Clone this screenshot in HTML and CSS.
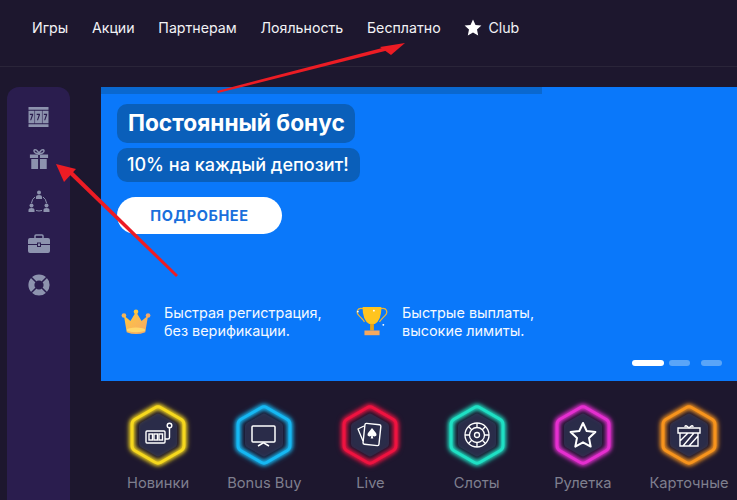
FILE: index.html
```html
<!DOCTYPE html>
<html lang="en">
<head>
	<meta charset="utf-8" />
	<title>Casino</title>
	<link rel="stylesheet" href="styles.css">
</head>
<body>
<header class="topbar">
	<nav class="nav">
		<a>Игры</a>
		<a>Акции</a>
		<a>Партнерам</a>
		<a>Лояльность</a>
		<a>Бесплатно</a>
		<a class="club">
			<svg width="18" height="17" viewBox="0 0 18 17"><path fill="#fff" d="M9 .5l2.500 5.400 5.900.7-4.400 4 1.200 5.800L9 13.500l-5.200 2.900L5 10.600l-4.400-4 5.900-.7z"/></svg>
			Club
		</a>
	</nav>
</header>

<div class="main">
	<aside class="sidebar">
		<!-- slots -->
		<svg width="23" height="20" viewBox="0 0 24 22"><path fill="#8d93ae" d="M1 0h22v3H1zM1 19h22v3H1zM1 4h6.600v14H1zM8.200 4h7.600v14H8.200zM16.400 4H23v14h-6.600z"/><path fill="#2a1d4e" d="M2.500 7.500h3.600v1.400L4 14.500H2.800l1.900-5.600H2.500zM10 7.500h3.600v1.400l-2.100 5.600h-1.200l1.900-5.600H10zM17.900 7.500h3.600v1.400l-2.100 5.600h-1.200l1.900-5.600h-2.200z"/></svg>
		<!-- gift -->
		<svg width="20" height="22" viewBox="0 0 22 24"><path fill="#8d93ae" d="M1 7h9v4H1zM12 7h9v4h-9zM2.500 12H10v11H2.500zM12 12h7.500v11H12z"/><path fill="none" stroke="#8d93ae" stroke-width="1.600" d="M11 6.500C8 6 5 5 5.500 2.500 6.500.5 10 2.500 11 6.500zM11 6.500c3-.5 6-1.500 5.500-4C15.500.5 12 2.500 11 6.500z"/></svg>
		<!-- network -->
		<svg width="22" height="23" viewBox="0 0 22 23"><circle cx="11" cy="2.500" r="2" fill="#8d93ae"/><path fill="#8d93ae" d="M8 9V7q0-2 3-2t3 2v2zM.5 22v-2q0-2 3-2t3 2v2zM15.500 22v-2q0-2 3-2t3 2v2z"/><circle cx="3.500" cy="15.500" r="2" fill="#8d93ae"/><circle cx="18.500" cy="15.500" r="2" fill="#8d93ae"/><path fill="none" stroke="#8d93ae" stroke-width="1" d="M7 7q-3 2-3.500 6M15 7q3 2 3.500 6M8 20.500q3 1 6 0"/></svg>
		<!-- case -->
		<svg width="22" height="19" viewBox="0 0 22 19"><path fill="#8d93ae" d="M2 4h18q2 0 2 2v4H13V8.500H9V10H0V6q0-2 2-2zM0 11h9v2h4v-2h9v6q0 2-2 2H2q-2 0-2-2zM10 9.500h2V12h-2z"/><path fill="none" stroke="#8d93ae" stroke-width="1.500" d="M7 4V2q0-1 1-1h6q1 0 1 1v2"/></svg>
		<!-- lifebuoy -->
		<svg width="22" height="22" viewBox="0 0 22 22"><circle cx="11" cy="11" r="7.600" fill="none" stroke="#8d93ae" stroke-width="6"/><path stroke="#2a1d4e" stroke-width="1.500" d="M3 3l5 5M19 3l-5 5M3 19l5-5M19 19l-5-5"/></svg>
	</aside>

	<div class="content">
		<section class="banner">
			<div class="progress"></div>
			<div class="banner-title">Постоянный бонус</div>
			<div class="banner-sub">10% на каждый депозит!</div>
			<button type="button" class="more">ПОДРОБНЕЕ</button>

			<div class="features">
				<div class="feature feature-reg">
					<svg width="30" height="26" viewBox="0 0 32 28">
						<defs><linearGradient id="crown" x1="0" y1="0" x2="1" y2="1"><stop offset="0" stop-color="#ffc93c"/><stop offset="1" stop-color="#f5a86a"/></linearGradient></defs>
						<circle cx="3" cy="7" r="2.500" fill="#f3b45c"/><circle cx="16" cy="3" r="2.500" fill="#ffc93c"/><circle cx="29" cy="7" r="2.500" fill="#f3a66a"/>
						<path fill="url(#crown)" d="M3 7l7 6 6-10 6 10 7-6-3 18q-10 4-20 0z"/>
						<ellipse cx="16" cy="22.500" rx="10" ry="2.500" fill="#ffd76b"/>
					</svg>
					<p>Быстрая регистрация,<br>без верификации.</p>
				</div>
				<div class="feature">
					<svg width="34" height="36" viewBox="0 0 36 36">
						<path fill="none" stroke="#e8b43a" stroke-width="1.300" d="M9 4C2 2 1 8 4 11s5 5 6 7M27 4c7-2 8 4 5 7s-5 5-6 7"/>
						<path fill="#ffc41f" d="M8 2h20q0 14-7 18h-6Q8 16 8 2z"/>
						<path fill="#e8a417" d="M16 20h4v7h-4z"/>
						<path fill="#f6a95e" d="M10 27h16v5H10z"/>
						<circle cx="20" cy="6" r="1" fill="#fff"/><circle cx="3" cy="7" r="1" fill="#fff"/><circle cx="30" cy="21" r="1" fill="#fff"/>
					</svg>
					<p>Быстрые выплаты,<br>высокие лимиты.</p>
				</div>
			</div>

			<div class="dots">
				<span class="dot dot-on"></span>
				<span class="dot"></span>
				<span class="dot"></span>
			</div>
		</section>

		<section class="cats">
			<div class="cat cat-yellow">
				<svg class="hex" width="66" height="72" viewBox="0 0 66 72">
					<use href="#hexagon"/>
					<g fill="none" stroke="#fff" stroke-width="1.400"><rect x="21" y="32" width="19" height="12" rx="1"/><rect x="24" y="35" width="3.500" height="6"/><rect x="29" y="35" width="3.500" height="6"/><rect x="34" y="35" width="3.500" height="6"/><path d="M40 40h3q1.500 0 1.500-1.500V29"/><circle cx="44.500" cy="26.500" r="2.300"/></g>
				</svg>
				<span>Новинки</span>
			</div>
			<div class="cat cat-blue">
				<svg class="hex" width="66" height="72" viewBox="0 0 66 72">
					<use href="#hexagon"/>
					<g fill="none" stroke="#fff" stroke-width="1.500"><rect x="21" y="27" width="23" height="16" rx="1"/><path d="M27 47l5-3h1l5 3"/></g>
				</svg>
				<span>Bonus Buy</span>
			</div>
			<div class="cat cat-red">
				<svg class="hex" width="66" height="72" viewBox="0 0 66 72">
					<use href="#hexagon"/>
					<path fill="none" stroke="#fff" stroke-width="1.300" d="M27 27l-6 3 5 12"/>
					<rect x="27" y="25" width="16" height="21" rx="1.500" fill="none" stroke="#fff" stroke-width="1.400" transform="rotate(6 35 35)"/>
					<path fill="#fff" d="M35 29l4 5q1.500 3-1.500 3.500-1 0-1.800-.8l.6 2.800h-2.600l.6-2.800q-.8.800-1.800.8-3-.5-1.500-3.500z"/>
				</svg>
				<span>Live</span>
			</div>
			<div class="cat cat-teal">
				<svg class="hex" width="66" height="72" viewBox="0 0 66 72">
					<use href="#hexagon"/>
					<g fill="none" stroke="#fff" stroke-width="1.300"><circle cx="33" cy="36" r="12"/><circle cx="33" cy="36" r="7.500"/><circle cx="33" cy="36" r="2.500"/><path d="M33 24v4.500M33 43.500V48M21 36h4.500M40.500 36H45M24.500 27.500l3.200 3.200M38.300 41.300l3.200 3.200M41.500 27.500l-3.200 3.200M27.700 41.300l-3.200 3.200"/></g>
				</svg>
				<span>Слоты</span>
			</div>
			<div class="cat cat-pink">
				<svg class="hex" width="66" height="72" viewBox="0 0 66 72">
					<use href="#hexagon"/>
					<path fill="none" stroke="#fff" stroke-width="2" stroke-linejoin="round" d="M33 24l3.700 8 8.700 1-6.400 6 1.700 8.600L33 43.300l-7.700 4.300 1.700-8.600-6.400-6 8.700-1z"/>
				</svg>
				<span>Рулетка</span>
			</div>
			<div class="cat cat-orange">
				<svg class="hex" width="66" height="72" viewBox="0 0 66 72">
					<use href="#hexagon"/>
					<g fill="none" stroke="#fff" stroke-width="1.400"><path d="M22 29h22v5H22zM24 34h18v13H24zM27 47l11-13M24 42l8-8M33 47l9-10"/><path d="M33 29q-4-4-4-1M33 29q4-4 4-1"/></g>
				</svg>
				<span>Карточные</span>
			</div>
		</section>
	</div>
</div>

<!-- shared hexagon for the categories -->
<svg class="defs" width="0" height="0">
	<symbol id="hexagon" viewBox="0 0 66 72" overflow="visible">
		<path class="hex-in" d="M31 15.200q2-1.200 4 0l15 8.600q2 1.200 2 3.400v17.600q0 2.200-2 3.400l-15 8.600q-2 1.200-4 0l-15-8.600q-2-1.200-2-3.400V27.200q0-2.200 2-3.400z"/>
		<path class="hex-out" d="M30 8.700q3-1.700 6 0l20 11.600q3 1.700 3 5.200v21q0 3.500-3 5.200L36 63.300q-3 1.700-6 0L10 51.700q-3-1.700-3-5.200v-21q0-3.500 3-5.200z"/>
	</symbol>
</svg>

<!-- red arrows drawn on top of the shot -->
<svg class="arrows" width="737" height="500" viewBox="0 0 737 500">
	<g fill="#ec1c24">
		<path d="M217 91L218 93L389 50L386 47z"/>
		<path d="M405 43L380 47L391 55z"/>
		<path d="M176 277L178 275L72 171L69 174z"/>
		<path d="M56 164L64 182L76 169z"/>
	</g>
</svg>
</body>
</html>
```

FILE: styles.css
```css
*{
	box-sizing: border-box;
	font-family: Inter, "Noto Sans", sans-serif;
}

html, body{
	margin: 0;
	height: 500px;
	overflow: hidden;
	background: #1d172e;
}

.topbar{
	height: 67px;
	border-bottom: 1px solid #2a2539;
	padding: 19px 0 0 32px;
}

.nav{
	display: flex;
	align-items: center;
	gap: 23.7px;
	font-size: 14.2px;
	color: #f2f2f5;
}

.club{
	display: flex;
	align-items: center;
	gap: 6px;
}

.main{
	display: flex;
	padding: 20px 0 0 7px;
}

.sidebar{
	width: 63px;
	height: 420px;
	margin-right: 31px;
	padding-top: 9px;
	background: #2a1d4e;
	border-radius: 12px 12px 0 0;
	display: grid;
	grid-auto-rows: 42px;
	align-content: start;
	place-items: center;
}

.content{
	flex: 1;
	min-width: 0;
}

.banner{
	height: 294px;
	background: #0a78fa;
	padding: 17px 0 0 16px;
	position: relative;
}

.progress{
	position: absolute;
	left: 0;
	top: 0;
	width: 441px;
	height: 7px;
	background: #0a68cf;
}

.banner-title, .banner-sub{
	width: max-content;
	background: #0a5fba;
	color: #fff;
	border-radius: 10px;
}

.banner-title{
	height: 39px;
	line-height: 38px;
	padding: 0 10px 0 11px;
	font-size: 22.7px;
	font-weight: 700;
}

.banner-sub{
	height: 34px;
	line-height: 34px;
	margin-top: 5px;
	padding: 0 11px 0 10px;
	font-size: 18.05px;
	font-weight: 500;
}

.more{
	display: block;
	width: 165px;
	height: 37px;
	margin-top: 15px;
	border: 0;
	border-radius: 19px;
	background: #fff;
	color: #1a6fdc;
	font-size: 14.5px;
	font-weight: 700;
	letter-spacing: .6px;
}

.features{
	display: flex;
	margin-top: 69px;
	padding-left: 4px;
}

.feature{
	display: flex;
	align-items: center;
	gap: 13px;
	color: #f4f8ff;
	font-size: 14.4px;
	line-height: 18px;
}

.feature-reg{
	width: 234px;
}

.feature p{
	margin: 1px 0 0;
}

.dots{
	position: absolute;
	right: 15px;
	bottom: 15px;
	display: flex;
	gap: 11px;
}

.dot{
	width: 21px;
	height: 6px;
	border-radius: 3px;
	background: #5aa5f8;
}

.dot-on{
	width: 32px;
	margin-right: -6px;
	background: #fff;
}

.cats{
	display: flex;
	padding: 18px 0 0 4px;
}

.cat{
	flex: 0 0 106.2px;
	display: flex;
	flex-direction: column;
	align-items: center;
	color: #7f7f8e;
	font-size: 14.7px;
}

.cat span{
	white-space: nowrap;
	margin-top: 3px;
}

.hex{
	display: block;
	overflow: visible;
}

.hex-in{
	fill: #2a2c49;
}

.hex-out{
	fill: none;
	stroke: var(--glow);
	stroke-width: 3;
	filter: drop-shadow(0 0 2px var(--glow)) drop-shadow(0 0 2px var(--glow));
}

.cat-yellow{ --glow: #f6d81e; }
.cat-blue{ --glow: #16b8f3; }
.cat-red{ --glow: #ee1340; }
.cat-teal{ --glow: #1fe0c4; }
.cat-pink{ --glow: #e52fd0; }
.cat-orange{ --glow: #f7941d; }

.defs{
	position: absolute;
}

.arrows{
	position: absolute;
	left: 0;
	top: 0;
	pointer-events: none;
}
```
